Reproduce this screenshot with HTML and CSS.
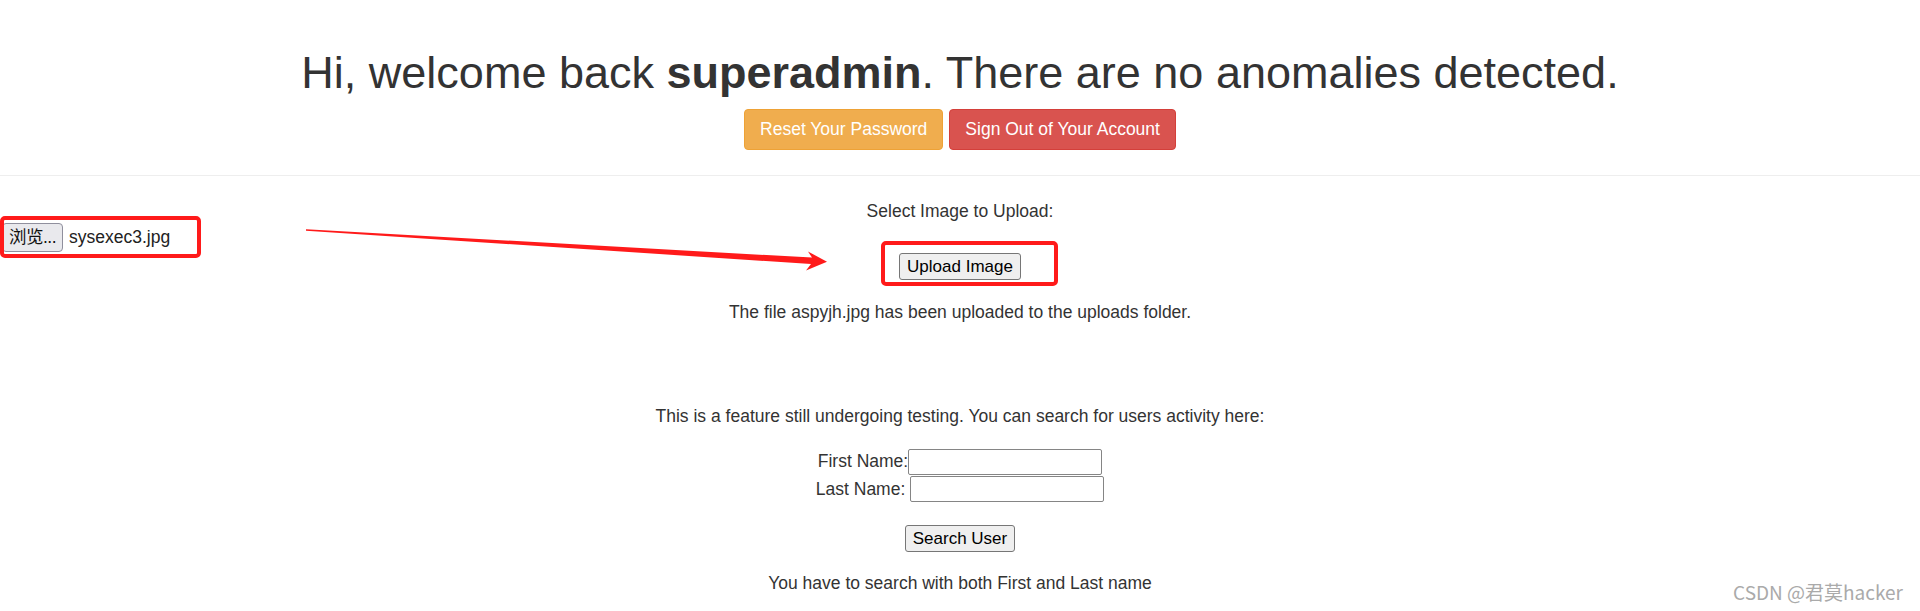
FILE: index.html
```html
<!DOCTYPE html>
<html lang="en">
<head>
    <meta charset="UTF-8">
    <title>Dashboard</title>
    <link rel="stylesheet" href="styles.css">
</head>
<body>

<div class="welcome">
    <h1>Hi, welcome back <b>superadmin</b>. There are no anomalies detected.</h1>
    <div class="actions">
        <a class="btn btn-warning" href="#">Reset Your Password</a>
        <a class="btn btn-danger" href="#">Sign Out of Your Account</a>
    </div>
</div>

<hr class="divider">

<div class="upload">
    <p class="select-label">Select Image to Upload:</p>
    <button type="button" class="plain-btn upload-btn">Upload Image</button>
    <p class="upload-msg">The file aspyjh.jpg has been uploaded to the uploads folder.</p>
</div>

<div class="search">
    <p class="search-intro">This is a feature still undergoing testing. You can search for users activity here:</p>
    <form class="search-form">
        <div class="field-row">
            <label for="fname">First Name:</label><input type="text" id="fname" name="fname">
        </div>
        <div class="field-row">
            <label for="lname">Last Name:&nbsp;</label><input type="text" id="lname" name="lname">
        </div>
        <button type="button" class="plain-btn search-btn">Search User</button>
        <p class="search-msg">You have to search with both First and Last name</p>
    </form>
</div>

<!-- annotation overlay -->
<div class="note-file">
    <span class="browse-btn">浏览...</span>
    <span class="file-name">sysexec3.jpg</span>
</div>
<div class="note-box"></div>
<svg class="note-arrow" width="1920" height="611" viewBox="0 0 1920 611">
    <polygon points="306,229.3 812,257.6 808,251.5 827,261.7 806,270.5 811,264 306,230.8" fill="#ff1a1a"/>
</svg>
<div class="watermark">CSDN @君莫hacker</div>

</body>
</html>
```

FILE: styles.css
```css
*, *::before, *::after {
    box-sizing: border-box;
}

body {
    margin: 0;
    font-family: "Liberation Sans", Arial, sans-serif;
    font-size: 17.5px;
    line-height: 25px;
    color: #333;
    background-color: #fff;
    text-align: center;
    position: relative;
    height: 611px;
    overflow: hidden;
}

p {
    margin: 0;
}

.welcome h1 {
    font-size: 45px;
    font-weight: normal;
    line-height: 49.5px;
    margin: 48px 0 11px;
}

.welcome h1 b {
    font-weight: bold;
}

.actions {
    display: flex;
    justify-content: center;
    gap: 6px;
}

.btn {
    display: inline-block;
    padding: 7px 15px;
    font-size: 17.5px;
    line-height: 25px;
    color: #fff;
    text-decoration: none;
    border: 1px solid transparent;
    border-radius: 4px;
    height: 41px;
}

.btn-warning {
    background-color: #f0ad4e;
    border-color: #eea236;
}

.btn-danger {
    background-color: #d9534f;
    border-color: #d43f3a;
}

.divider {
    margin: 25px 0 0;
    border: 0;
    border-top: 1px solid #eee;
}

.upload {
    display: flex;
    flex-direction: column;
    align-items: center;
    padding-top: 23px;
}

.plain-btn {
    font-family: "Liberation Sans", Arial, sans-serif;
    font-size: 17px;
    line-height: 21px;
    color: #000;
    background-color: #efefef;
    border: 1px solid #767676;
    border-radius: 3px;
    padding: 2px 7px;
    height: 27px;
}

.upload-btn {
    margin-top: 29px;
}

.upload-msg {
    margin-top: 20px;
}

.search {
    padding-top: 79px;
}

.search-form {
    display: flex;
    flex-direction: column;
    align-items: center;
    margin-top: 19.5px;
}

.field-row {
    display: flex;
    align-items: center;
    justify-content: center;
    height: 27.5px;
}

.field-row input {
    width: 194px;
    height: 26px;
    border: 1px solid #858585;
    border-radius: 2px;
    padding: 1px 3px;
    font-size: 16.7px;
}

.search-btn {
    margin-top: 21.5px;
}

.search-msg {
    margin-top: 19px;
}

/* annotation overlay */
.note-file {
    position: absolute;
    left: 2px;
    top: 223px;
    display: flex;
    align-items: center;
    gap: 6px;
    font-size: 17.5px;
    color: #222;
}

.browse-btn {
    display: inline-block;
    height: 29px;
    width: 61px;
    line-height: 27px;
    background-color: #e9e9ed;
    border: 1px solid #8f8f9d;
    border-radius: 4px;
    font-family: "Liberation Sans", "Noto Sans CJK SC", sans-serif;
    font-size: 17.5px;
    letter-spacing: -0.5px;
    color: #111;
}

.note-file::before {
    content: "";
    position: absolute;
    left: -2px;
    top: -7px;
    width: 201px;
    height: 42px;
    border: 4px solid #ff1a1a;
    border-radius: 5px;
}

.note-box {
    position: absolute;
    left: 881px;
    top: 241px;
    width: 177px;
    height: 45px;
    border: 4px solid #ff1a1a;
    border-radius: 5px;
}

.note-arrow {
    position: absolute;
    left: 0;
    top: 0;
}

.watermark {
    position: absolute;
    right: 17px;
    top: 580px;
    font-family: "Noto Sans CJK SC", "Noto Sans", sans-serif;
    font-size: 19px;
    line-height: 24px;
    color: #aaa;
}
```
